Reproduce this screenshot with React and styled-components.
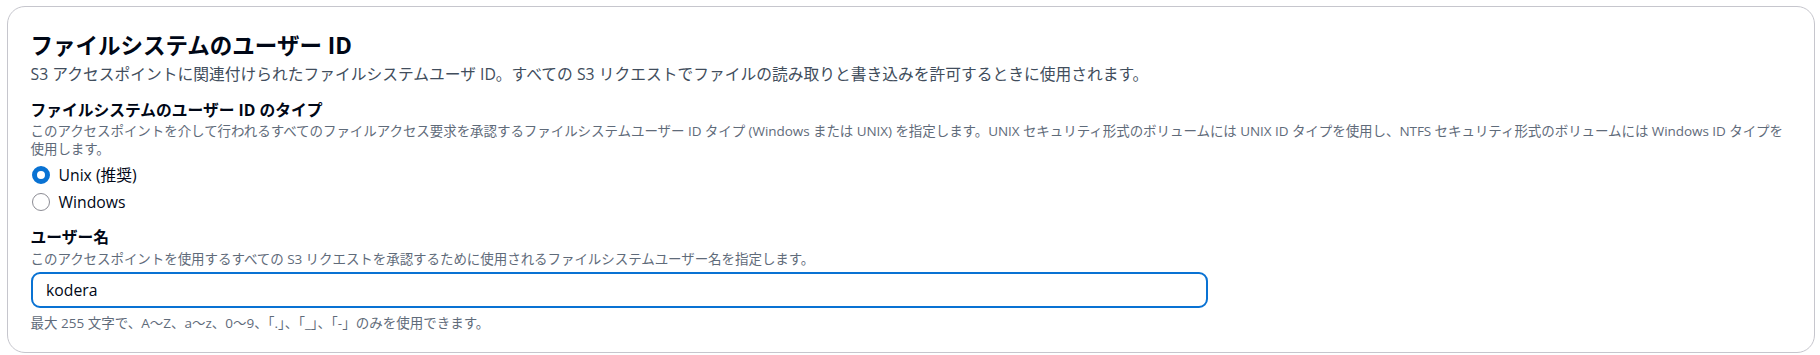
import React from "react";
import styled, { createGlobalStyle } from "styled-components";

const Global = createGlobalStyle`
  html, body { margin: 0; padding: 0; background: #ffffff; }
  body {
    font-family: "Open Sans", "Noto Sans CJK JP", sans-serif;
    color: #000716;
  }
`;

const Page = styled.div`
  padding: 6px 5px 2px 7px;
`;

const Card = styled.section`
  border: 1px solid #c6c6cd;
  border-radius: 18px;
  padding: 25px 22.5px 20px 22.5px;
  height: 347px;
  box-sizing: border-box;
  display: flex;
  flex-direction: column;
`;

const Header = styled.header`
  display: flex;
  flex-direction: column;
  gap: 4px;
`;

const Title = styled.h2`
  margin: 0;
  font-size: 22.5px;
  line-height: 27px;
  font-weight: 700;
  color: #000716;
`;

const Desc = styled.p`
  margin: ${(p) => p.$mt || "0"} 0 0 0;
  font-size: ${(p) => (p.$small ? "13.5px" : "15.75px")};
  line-height: ${(p) => (p.$small ? "18px" : "22.5px")};
  letter-spacing: ${(p) => (p.$small ? "-0.06px" : "normal")};
  color: ${(p) => (p.$dark ? "#414d5c" : "#5f6b7a")};
`;

const Field = styled.div`
  display: flex;
  flex-direction: column;
  margin-top: ${(p) => p.$mt || "0px"};
`;

const Label = styled.label`
  font-size: 15.75px;
  line-height: 22.5px;
  font-weight: 700;
  color: #000716;
`;

const RadioGroup = styled.div`
  display: flex;
  flex-direction: column;
  gap: 5px;
  margin-top: 6px;
`;

const RadioRow = styled.label`
  display: flex;
  align-items: center;
  gap: 9px;
  font-size: 15.75px;
  line-height: 22.5px;
  color: #000716;
`;

const RadioDot = styled.span`
  width: 18px;
  height: 18px;
  border-radius: 50%;
  box-sizing: border-box;
  flex: none;
  background: #fff;
  border: ${(p) => (p.$checked ? "5px solid #0972d3" : "1.5px solid #8c8c94")};
  margin-left: 1px;
`;

const Input = styled.input`
  margin-top: 4px;
  width: 1177px;
  height: 36px;
  box-sizing: border-box;
  border: 2px solid #0972d3;
  border-radius: 9px;
  padding: 0 13.5px;
  font-family: "Open Sans", "Noto Sans CJK JP", sans-serif;
  font-size: 15.75px;
  color: #000716;
  outline: none;
  background: #fff;
`;

const Constraint = styled.div`
  margin-top: 6px;
  font-size: 13.5px;
  line-height: 18px;
  color: #5f6b7a;
`;

export default function App() {
  return (
    <>
      <Global />
      <Page>
        <Card>
          <Header>
            <Title>ファイルシステムのユーザー ID</Title>
            <Desc $dark>
              S3 アクセスポイントに関連付けられたファイルシステムユーザ ID。すべての S3 リクエストでファイルの読み取りと書き込みを許可するときに使用されます。
            </Desc>
          </Header>
          <Field $mt="13.5px">
            <Label>ファイルシステムのユーザー ID のタイプ</Label>
            <Desc $small>
              このアクセスポイントを介して行われるすべてのファイルアクセス要求を承認するファイルシステムユーザー ID タイプ (Windows または UNIX) を指定します。UNIX セキュリティ形式のボリュームには UNIX ID タイプを使用し、NTFS セキュリティ形式のボリュームには Windows ID タイプを使用します。
            </Desc>
            <RadioGroup>
              <RadioRow>
                <RadioDot $checked />
                Unix (推奨)
              </RadioRow>
              <RadioRow>
                <RadioDot />
                Windows
              </RadioRow>
            </RadioGroup>
          </Field>
          <Field $mt="12.5px">
            <Label>ユーザー名</Label>
            <Desc $small $mt="1px">
              このアクセスポイントを使用するすべての S3 リクエストを承認するために使用されるファイルシステムユーザー名を指定します。
            </Desc>
            <Input defaultValue="kodera" />
            <Constraint>
              最大 255 文字で、A～Z、a～z、0～9、「.」、「_」、「-」のみを使用できます。
            </Constraint>
          </Field>
        </Card>
      </Page>
    </>
  );
}
